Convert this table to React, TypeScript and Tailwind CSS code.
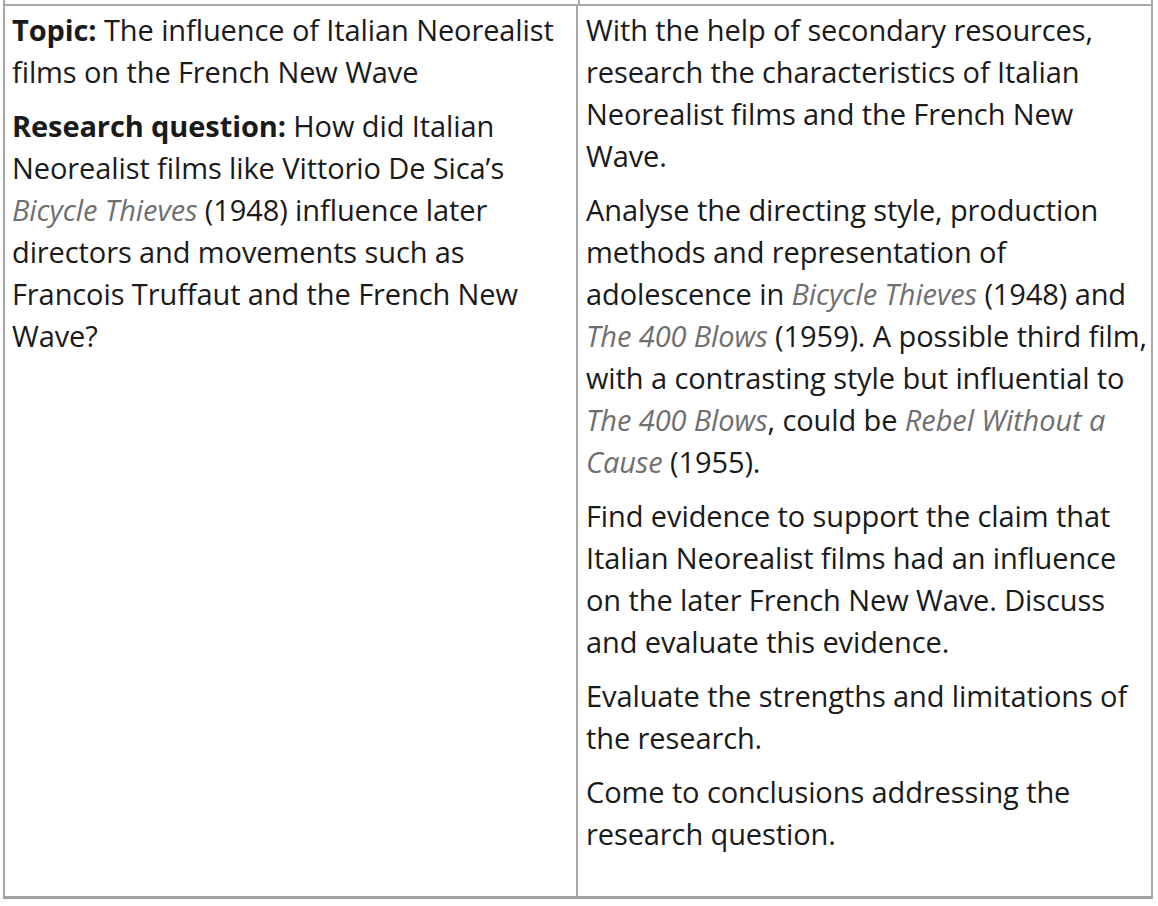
import React from "react";

const I = ({ children }: { children: React.ReactNode }) => (
  <span className="italic text-[#6f6f6f]">{children}</span>
);

const P = ({ lines }: { lines: React.ReactNode[] }) => (
  <p className="m-0">
    {lines.map((l, i) => (
      <span key={i} className="block whitespace-nowrap">
        {l}
      </span>
    ))}
  </p>
);

export default function App() {
  return (
    <div
      className="w-[1158px] h-[906px] bg-white text-[#1a1a1a] overflow-hidden"
      style={{ fontFamily: '"Open Sans", "Noto Sans", sans-serif' }}
    >
      <div className="ml-[3px] w-[1150px]">
        <div className="flex h-[4px]">
          <div className="w-[575px] border-l-2 border-[#a8a8a8]" />
          <div className="w-[575px] border-l-2 border-r-2 border-[#a8a8a8]" />
        </div>
        <div className="flex h-[895px] border-2 border-[#a8a8a8] border-b-[3px] border-b-[#a0a0a0] text-[29px] leading-[42px] tracking-[-0.1px]">
          <div className="w-[573px] border-r-2 border-[#a8a8a8] pl-[7px] pt-[3px] flex flex-col gap-[12px]">
            <P
              lines={[
                <>
                  <b className="font-bold">Topic:</b> The influence of Italian Neorealist
                </>,
                "films on the French New Wave",
              ]}
            />
            <P
              lines={[
                <>
                  <b className="font-bold">Research question:</b> How did Italian
                </>,
                "Neorealist films like Vittorio De Sica’s",
                <>
                  <I>Bicycle Thieves</I> (1948) influence later
                </>,
                "directors and movements such as",
                "Francois Truffaut and the French New",
                "Wave?",
              ]}
            />
          </div>
          <div className="flex-1 pl-[8px] pt-[3px] flex flex-col gap-[12px]">
            <P
              lines={[
                "With the help of secondary resources,",
                "research the characteristics of Italian",
                "Neorealist films and the French New",
                "Wave.",
              ]}
            />
            <P
              lines={[
                "Analyse the directing style, production",
                "methods and representation of",
                <>
                  adolescence in <I>Bicycle Thieves</I> (1948) and
                </>,
                <>
                  <I>The 400 Blows</I> (1959). A possible third film,
                </>,
                "with a contrasting style but influential to",
                <>
                  <I>The 400 Blows</I>, could be <I>Rebel Without a</I>
                </>,
                <>
                  <I>Cause</I> (1955).
                </>,
              ]}
            />
            <P
              lines={[
                "Find evidence to support the claim that",
                "Italian Neorealist films had an influence",
                "on the later French New Wave. Discuss",
                "and evaluate this evidence.",
              ]}
            />
            <P
              lines={[
                "Evaluate the strengths and limitations of",
                "the research.",
              ]}
            />
            <P
              lines={[
                "Come to conclusions addressing the",
                "research question.",
              ]}
            />
          </div>
        </div>
      </div>
    </div>
  );
}
